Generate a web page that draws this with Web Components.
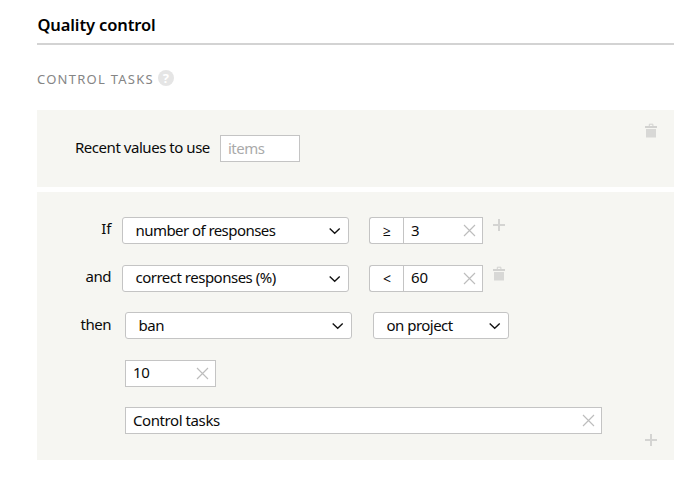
<!DOCTYPE html>
<html lang="en">
<head>
<meta charset="utf-8">
<title>Quality control</title>
<style>
html,body{margin:0;background:#fff}
body{font:15px/20px "Noto Sans","Open Sans",sans-serif;color:#0a0a0a;width:700px;height:480px;overflow:hidden}
</style>
</head>
<body>
<quality-page></quality-page>
<script>
const define=(name,html,setup)=>customElements.define(name,class extends HTMLElement{
  connectedCallback(){
    if(this.shadowRoot)return;
    this.attachShadow({mode:"open"}).innerHTML=html;
    if(setup)setup(this);
  }
});

const glyphs={
  trash:'<path d="M0 3h12v2H0z" fill="#d2d2d0"/><path d="M4.3 3V1.2h3.600V3" fill="none" stroke="#d2d2d0"/><path d="M1 6h10v8.5H1z" fill="#d8d8d6"/>',
  plus:'<path d="M6 1v12M0 7h12" fill="none" stroke="#d4d4d2" stroke-width="2"/>',
  cross:'<path d="M1 1l11 11M12 1L1 12" fill="none" stroke="#bdbdbd" stroke-width="1.15"/>',
  chevron:'<path d="M1.7 4.600l5 4.600 5-4.600" fill="none" stroke="#111" stroke-width="1.4"/>'
};
define("ui-glyph",`<style>:host{display:block;flex:none;width:13px;height:15px}svg{display:block}</style><svg width="13" height="15"></svg>`,
  el=>el.shadowRoot.querySelector("svg").innerHTML=glyphs[el.getAttribute("name")]||"");

define("ui-text",`<style>:host{display:block;white-space:nowrap}</style><slot></slot>`,
  el=>{el.style.letterSpacing=(el.getAttribute("tracking")||0)+"px"});

define("ui-select",`<style>
:host{display:flex;box-sizing:border-box;height:27px;border:1px solid #c4c4c4;border-radius:3px;background:#fff;align-items:center;justify-content:space-between;padding:0 7px 0 12.5px}
.value{padding-bottom:2px}
ui-glyph{height:13px}
</style><div class="value"><slot></slot></div><ui-glyph name="chevron"></ui-glyph>`);

define("ui-input",`<style>
:host{display:flex;box-sizing:border-box;height:27px;border:1px solid #c4c4c4;background:#fff;align-items:center;justify-content:space-between;padding:0 6px 0 7px}
.value{padding-bottom:2px}
ui-glyph{height:13px}
:host([placeholder]) ui-glyph{display:none}
:host([placeholder]){color:#aaa}
</style><div class="value"><slot></slot></div><ui-glyph name="cross"></ui-glyph>`);

define("compare-input",`<style>
:host{display:flex;width:114px}
.op{box-sizing:border-box;width:34px;height:27px;border:1px solid #c4c4c4;border-right:0;border-radius:3px 0 0 3px;background:#fff;font-size:14px;line-height:25px;text-align:center;padding-left:1px}
ui-input{flex:1}
</style><div class="op"><slot name="op"></slot></div><ui-input><slot></slot></ui-input>`);

define("rule-row",`<style>
:host{display:grid;grid-template-columns:74px auto;height:27px;align-items:start}
.label{justify-self:end;padding-top:1.4px}
.fields{display:flex}
</style><div class="label"><slot name="label"></slot></div><div class="fields"><slot></slot></div>`);

define("rule-panel",`<style>
:host{display:block;box-sizing:border-box;background:#f6f6f2;position:relative}
.action{position:absolute;right:16px}
:host([action=trash]) .action{top:13px}
:host([action=plus]) .action{bottom:12px}
</style><slot></slot><div class="action"></div>`,
  el=>{
    const g=document.createElement("ui-glyph");
    g.setAttribute("name",el.getAttribute("action"));
    el.shadowRoot.querySelector(".action").append(g);
  });

define("help-badge",`<style>
:host{display:block;width:16px;height:16px;border-radius:50%;background:#e5e5e5;color:#fff;font:bold 13px/16px "Noto Sans",sans-serif;text-align:center}
</style><slot></slot>`);

define("quality-page",`<style>
:host{display:block;padding:14px 26px 0 37px}
h1{margin:0;height:31px;border-bottom:2px solid #d3d3d3;font:600 16.5px/22px "Noto Sans","Open Sans",sans-serif;color:#000;box-sizing:border-box;padding-left:.5px}
.section{display:flex;height:65px;box-sizing:border-box;padding-top:24px;gap:4px;color:#858585;font-size:13px}
.first{height:77px;display:flex;padding:25px 0 0 38px}
.first .use{width:145px;padding-top:2px}
.first ui-input{width:80px}
.second{height:268px;margin-top:5px;padding-top:25px}
.stack{display:grid;row-gap:20.6px}
.wide{width:227px}
.cmp{margin-left:20px}
.add{margin:1px 0 0 10px}
</style>
<h1><ui-text tracking="-.12">Quality control</ui-text></h1>
<div class="section"><ui-text tracking="1.25">CONTROL TASKS</ui-text><help-badge style="margin-top:1px">?</help-badge></div>
<rule-panel class="first" action="trash">
  <ui-text class="use" tracking="-.46">Recent values to use</ui-text>
  <ui-input placeholder><ui-text tracking="-.5">items</ui-text></ui-input>
</rule-panel>
<rule-panel class="second" action="plus"><div class="stack">
  <rule-row><ui-text slot="label" tracking="-.3">If</ui-text>
    <ui-select class="wide" style="margin-left:11px"><ui-text tracking="-.56">number of responses</ui-text></ui-select>
    <compare-input class="cmp"><span slot="op">≥</span><ui-text>3</ui-text></compare-input><ui-glyph class="add" name="plus"></ui-glyph></rule-row>
  <rule-row><ui-text slot="label" tracking="-.5">and</ui-text>
    <ui-select class="wide" style="margin-left:11px"><ui-text tracking="-.5">correct responses (%)</ui-text></ui-select>
    <compare-input class="cmp"><span slot="op">&lt;</span><ui-text tracking="-.2">60</ui-text></compare-input><ui-glyph class="add" name="trash"></ui-glyph></rule-row>
  <rule-row><ui-text slot="label" tracking="-.5">then</ui-text>
    <ui-select class="wide" style="margin-left:14px"><ui-text tracking="-.5">ban</ui-text></ui-select>
    <ui-select style="width:136px;margin-left:21px"><ui-text tracking="-.52">on project</ui-text></ui-select></rule-row>
  <rule-row><ui-input style="width:91px;margin-left:14px"><ui-text tracking="-.3">10</ui-text></ui-input></rule-row>
  <rule-row><ui-input style="width:477px;margin-left:14px"><ui-text tracking="-.42">Control tasks</ui-text></ui-input></rule-row>
</div></rule-panel>`);
</script>
</body>
</html>
